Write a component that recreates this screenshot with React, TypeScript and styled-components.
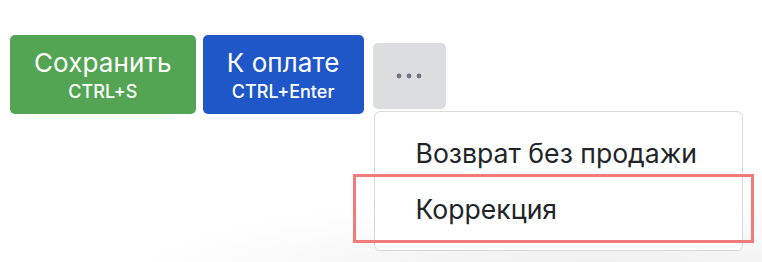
import React from 'react';
import styled, {createGlobalStyle} from "styled-components";

const GlobalStyle = createGlobalStyle`
  html, body {
    margin: 0;
    padding: 0;
  }
  body {
    width: 762px;
    height: 262px;
    overflow: hidden;
    font-family: Inter, "Liberation Sans", Arial, sans-serif;
    background: radial-gradient(ellipse 62% 34% at 78% 108%, #ebebeb 0%, #f6f6f6 50%, #ffffff 100%);
  }
`

const Toolbar = styled.div`
  display: flex;
  align-items: flex-start;
  padding: 35px 0 0 10px;
`

const ActionButton = styled.button<{ $bg: string; $gap?: number }>`
  display: flex;
  flex-direction: column;
  align-items: center;
  justify-content: center;
  height: 79px;
  padding: 0 24px;
  margin-right: ${(props) => props.$gap ?? 0}px;
  border: none;
  border-radius: 5px;
  background-color: ${(props) => props.$bg};
  color: #ffffff;
  font-family: Inter, "Liberation Sans", Arial, sans-serif;
  cursor: pointer;
`

const Label = styled.span`
  font-size: 26px;
  line-height: 31px;
  letter-spacing: 0.1px;
`

const Hotkey = styled.span`
  font-size: 18px;
  font-weight: 500;
  line-height: 21px;
  margin-top: 3px;
`

const MoreWrap = styled.div`
  position: relative;
  margin-top: 8px;
`

const MoreButton = styled.button`
  display: flex;
  align-items: center;
  justify-content: center;
  width: 73px;
  height: 66px;
  padding: 0;
  border: none;
  border-radius: 5px;
  background-color: #dcdde0;
  cursor: pointer;
`

const Menu = styled.div`
  position: absolute;
  top: 68px;
  left: 1px;
  width: 367px;
  padding: 13px 0 13px;
  background: #ffffff;
  border: 1px solid #d9d9d9;
  border-radius: 6px;
`

const MenuItem = styled.div`
  position: relative;
  padding-left: 41px;
  height: 56px;
  line-height: 56px;
  font-size: 26.6px;
  color: #212529;
  white-space: nowrap;
`

const Highlight = styled.div`
  position: absolute;
  top: -7px;
  bottom: -6px;
  left: -22px;
  right: -12px;
  border: 3px solid #f07b78;
  pointer-events: none;
`

function Dots() {
  return (
    <svg width="26" height="8" viewBox="0 0 26 8">
      <circle cx="3" cy="4" r="2.4" fill="#6c757d"/>
      <circle cx="13" cy="4" r="2.4" fill="#6c757d"/>
      <circle cx="23" cy="4" r="2.4" fill="#6c757d"/>
    </svg>
  )
}

function App() {
  return (
    <>
      <GlobalStyle/>
      <Toolbar>
        <ActionButton $bg="#53a553" $gap={7}>
          <Label>Сохранить</Label>
          <Hotkey>CTRL+S</Hotkey>
        </ActionButton>
        <ActionButton $bg="#1f57c8" $gap={9}>
          <Label>К оплате</Label>
          <Hotkey>CTRL+Enter</Hotkey>
        </ActionButton>
        <MoreWrap>
          <MoreButton>
            <Dots/>
          </MoreButton>
          <Menu>
            <MenuItem>Возврат без продажи</MenuItem>
            <MenuItem>
              Коррекция
              <Highlight/>
            </MenuItem>
          </Menu>
        </MoreWrap>
      </Toolbar>
    </>
  );
}

export default App;
